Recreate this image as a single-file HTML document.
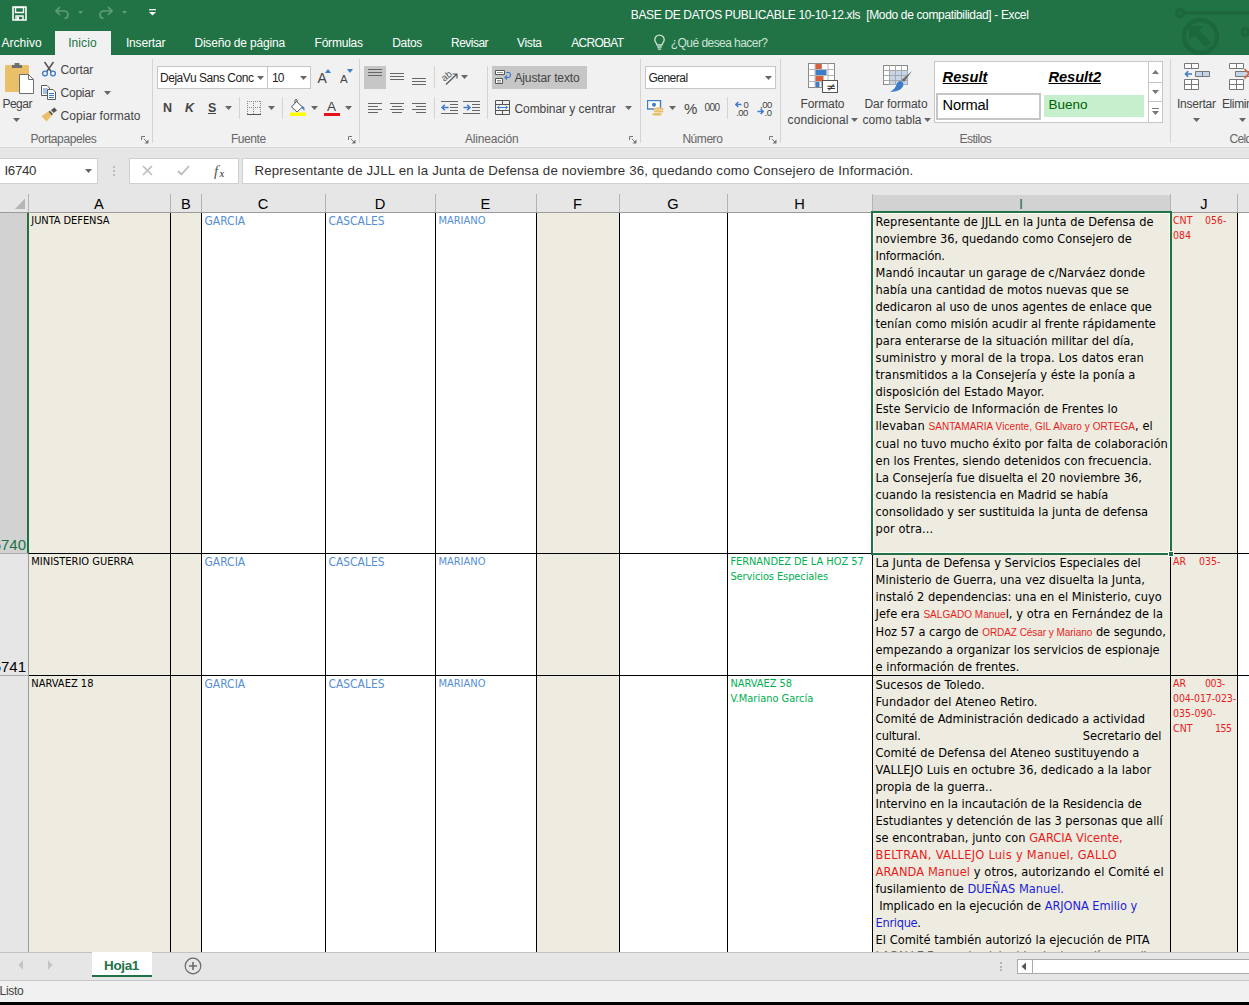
<!DOCTYPE html>
<html lang="es"><head><meta charset="utf-8"><title>BASE DE DATOS PUBLICABLE 10-10-12.xls - Excel</title>
<style>
html,body{margin:0;padding:0}
body{width:1249px;height:1005px;position:relative;overflow:hidden;background:#fff;font-family:"Liberation Sans",sans-serif;font-size:12px;color:#444}
body>div,body>svg,body>span{position:absolute}
.t{white-space:pre;line-height:0;display:block}
.c{white-space:pre;font-family:"DejaVu Sans Condensed","DejaVu Sans",sans-serif;color:#000}
.c div{height:17px;line-height:17px}
.r{color:#e81c1c}.b{color:#1c1cd8}
.a{font-family:"Liberation Sans",sans-serif;color:#e81c1c}
</style></head><body>
<div style="left:0px;top:0px;width:1249px;height:55px;background:#217346;"></div>
<div style="left:0px;top:55px;width:1249px;height:92px;background:#f1f1f1;"></div>
<div style="left:0px;top:147px;width:1249px;height:1px;background:#d6d6d6;"></div>
<div style="left:0px;top:148px;width:1249px;height:65px;background:#e6e6e6;"></div>
<div style="left:55px;top:31px;width:56px;height:24px;background:#f1f1f1;"></div>
<svg style="left:1150px;top:0px" width="99" height="55" viewBox="0 0 99 55"><g fill="none" stroke="#1c673d" stroke-width="3.6"><circle cx="30" cy="13" r="3.4"/><path d="M34.5 13H99"/><circle cx="50.5" cy="36.5" r="16.5" stroke-width="4.4"/><circle cx="95.5" cy="32" r="3.4"/></g><path d="M39 26H53.5L49 30.5L61 42.5L56 47.5L44 35.5L39 40.5Z" fill="#1c673d"/></svg>
<svg style="left:12px;top:6px" width="15" height="15" viewBox="0 0 15 15"><path d="M1 1H14V14H1Z" fill="none" stroke="#fff" stroke-width="1.6"/><path d="M3.5 1.5H11.5V6.5H3.5Z" fill="none" stroke="#fff" stroke-width="1.4"/><path d="M4 14V10H11V14" fill="none" stroke="#fff" stroke-width="1.4"/><rect x="5" y="11" width="2" height="3" fill="#fff"/></svg>
<svg style="left:54px;top:6px" width="16" height="13" viewBox="0 0 16 13"><path d="M6 1L2 5L6 9M2 5H10Q14 5 14 9Q14 12 10.5 12.5" fill="none" stroke="#5f9c7a" stroke-width="1.7"/></svg>
<svg style="left:78.0px;top:10.5px" width="5" height="3" viewBox="0 0 5 3"><path d="M0 0H5L2.5 3Z" fill="#5f9c7a"/></svg>
<svg style="left:98px;top:6px" width="16" height="13" viewBox="0 0 16 13"><path d="M10 1L14 5L10 9M14 5H6Q2 5 2 9Q2 12 5.5 12.5" fill="none" stroke="#5f9c7a" stroke-width="1.7"/></svg>
<svg style="left:122.0px;top:10.5px" width="5" height="3" viewBox="0 0 5 3"><path d="M0 0H5L2.5 3Z" fill="#5f9c7a"/></svg>
<svg style="left:149px;top:9px" width="7" height="7" viewBox="0 0 7 7"><path d="M0 0.7H7" stroke="#fff" stroke-width="1.2"/><path d="M0 3H7L3.5 6.5Z" fill="#fff"/></svg>
<span class="t" style="top:15.25px;font-size:12px;color:#fff;letter-spacing:-0.348px;left:630.8px;">BASE DE DATOS PUBLICABLE 10-10-12.xls  [Modo de compatibilidad] - Excel</span>
<span class="t" style="top:42.75px;font-size:12px;color:#fff;letter-spacing:-0.002px;left:1.6px;">Archivo</span>
<span class="t" style="top:42.75px;font-size:12px;color:#217346;letter-spacing:0.081px;left:68.2px;">Inicio</span>
<span class="t" style="top:42.75px;font-size:12px;color:#fff;letter-spacing:-0.161px;left:125.9px;">Insertar</span>
<span class="t" style="top:42.75px;font-size:12px;color:#fff;letter-spacing:-0.175px;left:194.4px;">Diseño de página</span>
<span class="t" style="top:42.75px;font-size:12px;color:#fff;letter-spacing:-0.202px;left:314.5px;">Fórmulas</span>
<span class="t" style="top:42.75px;font-size:12px;color:#fff;letter-spacing:-0.312px;left:392.2px;">Datos</span>
<span class="t" style="top:42.75px;font-size:12px;color:#fff;letter-spacing:-0.541px;left:451.1px;">Revisar</span>
<span class="t" style="top:42.75px;font-size:12px;color:#fff;letter-spacing:-0.354px;left:517px;">Vista</span>
<span class="t" style="top:42.75px;font-size:12px;color:#fff;letter-spacing:-0.704px;left:571.2px;">ACROBAT</span>
<svg style="left:653px;top:34px" width="13" height="17" viewBox="0 0 13 17"><path d="M6.5 1.2C3.6 1.2 1.8 3.3 1.8 5.7C1.8 8 3.6 8.9 4 11H9C9.4 8.9 11.2 8 11.2 5.7C11.2 3.3 9.4 1.2 6.5 1.2Z" fill="none" stroke="#cfe3d7" stroke-width="1.3"/><path d="M4.3 13H8.7M4.8 15.2H8.2" stroke="#cfe3d7" stroke-width="1.3"/></svg>
<span class="t" style="top:42.75px;font-size:12px;color:#cfe3d7;letter-spacing:-0.552px;left:670.8px;">¿Qué desea hacer?</span>
<div style="left:0px;top:213px;width:28px;height:739px;background:#e6e6e6;"></div>
<div style="left:0px;top:213px;width:27px;height:340px;background:#d2d2d2;"></div>
<div style="left:27px;top:213px;width:2px;height:341px;background:#217346;"></div>
<div style="left:28px;top:554px;width:1px;height:398px;background:#9b9b9b;"></div>
<div style="left:0px;top:553px;width:28px;height:1px;background:#ababab;"></div>
<div style="left:0px;top:675px;width:28px;height:1px;background:#ababab;"></div>
<div style="left:873px;top:195px;width:297px;height:17px;background:#d2d2d2;"></div>
<div style="left:29px;top:213px;width:141px;height:739px;background:#eeece1;"></div>
<div style="left:171px;top:213px;width:30px;height:739px;background:#eeece1;"></div>
<div style="left:537px;top:213px;width:82px;height:739px;background:#eeece1;"></div>
<div style="left:873px;top:213px;width:297px;height:739px;background:#eeece1;"></div>
<div style="left:1171px;top:213px;width:66px;height:739px;background:#eeece1;"></div>
<div style="left:0px;top:212px;width:1249px;height:1px;background:#9b9b9b;"></div>
<div style="left:28px;top:194px;width:1px;height:18px;background:#b4b4b4;"></div>
<div style="left:170px;top:194px;width:1px;height:18px;background:#b4b4b4;"></div>
<div style="left:201px;top:194px;width:1px;height:18px;background:#b4b4b4;"></div>
<div style="left:325px;top:194px;width:1px;height:18px;background:#b4b4b4;"></div>
<div style="left:435px;top:194px;width:1px;height:18px;background:#b4b4b4;"></div>
<div style="left:536px;top:194px;width:1px;height:18px;background:#b4b4b4;"></div>
<div style="left:619px;top:194px;width:1px;height:18px;background:#b4b4b4;"></div>
<div style="left:727px;top:194px;width:1px;height:18px;background:#b4b4b4;"></div>
<div style="left:872px;top:194px;width:1px;height:18px;background:#b4b4b4;"></div>
<div style="left:1170px;top:194px;width:1px;height:18px;background:#b4b4b4;"></div>
<div style="left:1237px;top:194px;width:1px;height:18px;background:#b4b4b4;"></div>
<div style="left:170px;top:213px;width:1px;height:739px;background:#000;"></div>
<div style="left:201px;top:213px;width:1px;height:739px;background:#000;"></div>
<div style="left:325px;top:213px;width:1px;height:739px;background:#000;"></div>
<div style="left:435px;top:213px;width:1px;height:739px;background:#000;"></div>
<div style="left:536px;top:213px;width:1px;height:739px;background:#000;"></div>
<div style="left:619px;top:213px;width:1px;height:739px;background:#000;"></div>
<div style="left:727px;top:213px;width:1px;height:739px;background:#000;"></div>
<div style="left:872px;top:213px;width:1px;height:739px;background:#000;"></div>
<div style="left:1170px;top:213px;width:1px;height:739px;background:#000;"></div>
<div style="left:1237px;top:213px;width:1px;height:739px;background:#000;"></div>
<div style="left:29px;top:553px;width:1220px;height:1px;background:#000;"></div>
<div style="left:29px;top:675px;width:1220px;height:1px;background:#000;"></div>
<div style="left:873px;top:213px;width:297px;height:340px;border:1px solid rgba(255,255,255,.75);box-sizing:border-box;"></div>
<div style="left:871px;top:211px;width:301px;height:344px;border:2px solid #217346;box-sizing:border-box;"></div>
<div style="left:1168px;top:551px;width:6px;height:6px;background:#217346;border:1px solid #fff;box-sizing:border-box;"></div>
<svg style="left:14.5px;top:198px" width="10.5" height="11" viewBox="0 0 10.5 11"><path d="M10.5 0V11H0Z" fill="#b5b5b5"/></svg>
<span class="t" style="top:203.52px;font-size:14.67px;color:#000;left:94.11px;">A</span>
<span class="t" style="top:203.52px;font-size:14.67px;color:#000;left:181.11px;">B</span>
<span class="t" style="top:203.52px;font-size:14.67px;color:#000;left:257.7px;">C</span>
<span class="t" style="top:203.52px;font-size:14.67px;color:#000;left:374.7px;">D</span>
<span class="t" style="top:203.52px;font-size:14.67px;color:#000;left:480.61px;">E</span>
<span class="t" style="top:203.52px;font-size:14.67px;color:#000;left:573.02px;">F</span>
<span class="t" style="top:203.52px;font-size:14.67px;color:#000;left:667.3px;">G</span>
<span class="t" style="top:203.52px;font-size:14.67px;color:#000;left:794.2px;">H</span>
<span class="t" style="top:203.52px;font-size:14.67px;color:#000;left:1200.34px;">J</span>
<span class="t" style="top:203.52px;font-size:14.67px;color:#217346;left:1018.96px;">I</span>
<span class="t" style="top:544.61px;font-size:15px;color:#217346;left:-7.38px;">6740</span>
<span class="t" style="top:666.61px;font-size:15px;color:#000;left:-7.38px;">6741</span>
<div style="left:152px;top:59px;width:1px;height:84px;background:#d4d4d4;"></div>
<div style="left:359px;top:59px;width:1px;height:84px;background:#d4d4d4;"></div>
<div style="left:640px;top:59px;width:1px;height:84px;background:#d4d4d4;"></div>
<div style="left:780px;top:59px;width:1px;height:84px;background:#d4d4d4;"></div>
<div style="left:1170px;top:59px;width:1px;height:84px;background:#d4d4d4;"></div>
<div style="left:239px;top:97px;width:1px;height:22px;background:#d4d4d4;"></div>
<div style="left:282px;top:97px;width:1px;height:22px;background:#d4d4d4;"></div>
<div style="left:434px;top:66px;width:1px;height:22px;background:#d4d4d4;"></div>
<div style="left:434px;top:97px;width:1px;height:22px;background:#d4d4d4;"></div>
<div style="left:487px;top:66px;width:1px;height:53px;background:#d4d4d4;"></div>
<div style="left:727px;top:97px;width:1px;height:22px;background:#d4d4d4;"></div>
<span class="t" style="top:139.35px;font-size:12px;color:#666;letter-spacing:-0.393px;left:30.4px;">Portapapeles</span>
<span class="t" style="top:139.35px;font-size:12px;color:#666;letter-spacing:-0.460px;left:231px;">Fuente</span>
<span class="t" style="top:139.35px;font-size:12px;color:#666;letter-spacing:-0.198px;left:465px;">Alineación</span>
<span class="t" style="top:139.35px;font-size:12px;color:#666;letter-spacing:-0.448px;left:682.4px;">Número</span>
<span class="t" style="top:139.35px;font-size:12px;color:#666;letter-spacing:-0.478px;left:959.4px;">Estilos</span>
<span class="t" style="top:139.35px;font-size:12px;color:#666;letter-spacing:-0.727px;left:1229.6px;">Celdas</span>
<svg style="left:141px;top:135.5px" width="8" height="8" viewBox="0 0 8 8"><path d="M0.5 4V0.5H4" fill="none" stroke="#777" stroke-width="1"/><path d="M2.8 2.8L6 6" stroke="#777" stroke-width="1"/><path d="M7.5 3.5V7.5H3.5Z" fill="#777"/></svg>
<svg style="left:348px;top:135.5px" width="8" height="8" viewBox="0 0 8 8"><path d="M0.5 4V0.5H4" fill="none" stroke="#777" stroke-width="1"/><path d="M2.8 2.8L6 6" stroke="#777" stroke-width="1"/><path d="M7.5 3.5V7.5H3.5Z" fill="#777"/></svg>
<svg style="left:628.5px;top:135.5px" width="8" height="8" viewBox="0 0 8 8"><path d="M0.5 4V0.5H4" fill="none" stroke="#777" stroke-width="1"/><path d="M2.8 2.8L6 6" stroke="#777" stroke-width="1"/><path d="M7.5 3.5V7.5H3.5Z" fill="#777"/></svg>
<svg style="left:769px;top:135.5px" width="8" height="8" viewBox="0 0 8 8"><path d="M0.5 4V0.5H4" fill="none" stroke="#777" stroke-width="1"/><path d="M2.8 2.8L6 6" stroke="#777" stroke-width="1"/><path d="M7.5 3.5V7.5H3.5Z" fill="#777"/></svg>
<svg style="left:4px;top:62px" width="30" height="32" viewBox="0 0 30 32"><rect x="1" y="3" width="24" height="27" rx="1.5" fill="#e9bf69"/><path d="M8 5V3H10.5V1H15.5V3H18V6H8Z" fill="#6e6e6e"/><path d="M15.5 12.5H24.5L29.5 17.5V31.5H15.5Z" fill="#fff" stroke="#6e6e6e" stroke-width="1"/><path d="M24.5 12.5V17.5H29.5" fill="none" stroke="#6e6e6e" stroke-width="1"/></svg>
<span class="t" style="top:103.85px;font-size:12px;color:#444;letter-spacing:-0.486px;left:2.4px;">Pegar</span>
<svg style="left:13.100000000000001px;top:117.5px" width="7" height="4" viewBox="0 0 7 4"><path d="M0 0H7L3.5 4Z" fill="#666"/></svg>
<svg style="left:41px;top:61px" width="16" height="16" viewBox="0 0 16 16"><path d="M3.5 1L10.5 11M12.5 1L5.5 11" stroke="#555" stroke-width="1.5" fill="none"/><circle cx="4" cy="12.5" r="2.4" fill="none" stroke="#3d7cc9" stroke-width="1.3"/><circle cx="12" cy="12.5" r="2.4" fill="none" stroke="#3d7cc9" stroke-width="1.3"/></svg>
<span class="t" style="top:69.85px;font-size:12px;color:#444;letter-spacing:-0.157px;left:60.6px;">Cortar</span>
<svg style="left:41px;top:85px" width="16" height="15" viewBox="0 0 16 15"><path d="M0.5 0.5H6L8.5 3V10.5H0.5Z" fill="#fff" stroke="#5a5a5a"/><path d="M2 4H6.5M2 6H6.5M2 8H6.5" stroke="#3d7cc9" stroke-width="1"/><path d="M6.5 4.5H12L14.5 7V14.5H6.5Z" fill="#fff" stroke="#5a5a5a"/><path d="M8 8.5H13M8 10.5H13M8 12.5H13" stroke="#3d7cc9" stroke-width="1"/></svg>
<span class="t" style="top:92.85px;font-size:12px;color:#444;letter-spacing:-0.260px;left:60.6px;">Copiar</span>
<svg style="left:103.9px;top:90.5px" width="7" height="4" viewBox="0 0 7 4"><path d="M0 0H7L3.5 4Z" fill="#666"/></svg>
<svg style="left:41px;top:107px" width="17" height="15" viewBox="0 0 17 15"><path d="M10 3L13.5 0.5L16 3.5L12.5 6Z" fill="#555"/><path d="M9 3.5L12 7L5.5 14.5L0.5 9Z" fill="#e9bf69"/><path d="M8.2 4.2L11.3 7.8" stroke="#555" stroke-width="1.6"/></svg>
<span class="t" style="top:115.85px;font-size:12px;color:#444;letter-spacing:0.045px;left:60.6px;">Copiar formato</span>
<div style="left:157px;top:66px;width:111px;height:23px;background:#fff;border:1px solid #c6c6c6;box-sizing:border-box;"></div>
<div style="left:268px;top:66px;width:43px;height:23px;background:#fff;border:1px solid #c6c6c6;box-sizing:border-box;border-left:none;"></div>
<span class="t" style="top:77.85px;font-size:12px;color:#222;letter-spacing:-0.466px;left:160px;width:94px;overflow:hidden;height:20px;margin-top:-10px;line-height:20px;">DejaVu Sans Conc</span>
<svg style="left:256.9px;top:75.6px" width="7" height="4" viewBox="0 0 7 4"><path d="M0 0H7L3.5 4Z" fill="#666"/></svg>
<span class="t" style="top:77.85px;font-size:12px;color:#222;letter-spacing:-0.930px;left:272px;">10</span>
<svg style="left:299.9px;top:75.6px" width="7" height="4" viewBox="0 0 7 4"><path d="M0 0H7L3.5 4Z" fill="#666"/></svg>
<span class="t" style="top:77.76px;font-size:14px;color:#444;left:317.6px;">A</span>
<svg style="left:325px;top:69px" width="6" height="4" viewBox="0 0 6 4"><path d="M0 4H6L3 0Z" fill="#3d7cc9"/></svg>
<span class="t" style="top:78.62px;font-size:11.5px;color:#444;left:340px;">A</span>
<svg style="left:346.5px;top:69px" width="6" height="4" viewBox="0 0 6 4"><path d="M0 0H6L3 4Z" fill="#3d7cc9"/></svg>
<span class="t" style="top:107.88px;font-size:12.5px;color:#444;left:163px;font-weight:bold;">N</span>
<span class="t" style="top:107.88px;font-size:12.5px;color:#444;left:185px;font-weight:bold;font-style:italic;">K</span>
<span class="t" style="top:107.88px;font-size:12.5px;color:#444;left:208px;font-weight:bold;">S</span>
<div style="left:207.5px;top:113px;width:8.5px;height:1px;background:#444;"></div>
<svg style="left:224.5px;top:106.2px" width="7" height="4" viewBox="0 0 7 4"><path d="M0 0H7L3.5 4Z" fill="#666"/></svg>
<svg style="left:247px;top:101px" width="14" height="14" viewBox="0 0 14 14"><g shape-rendering="crispEdges" fill="none" stroke="#8a8a8a" stroke-width="1" stroke-dasharray="1 1"><path d="M0 0.5H14M0 6.5H14M0.5 0V13M6.5 0V13M13.5 0V13"/></g><path d="M0 13.5H14" stroke="#555" stroke-width="1" shape-rendering="crispEdges"/></svg>
<svg style="left:267.9px;top:106.2px" width="7" height="4" viewBox="0 0 7 4"><path d="M0 0H7L3.5 4Z" fill="#666"/></svg>
<svg style="left:290px;top:99px" width="17" height="18" viewBox="0 0 17 18"><path d="M6.5 2.5L12.5 8L7 13L1.5 8Z" fill="#fff" stroke="#555" stroke-width="1"/><path d="M5 4V1.5Q5 0.5 6 0.5T7 1.5V3" fill="none" stroke="#555" stroke-width="1"/><path d="M12.5 7Q15.5 8.5 14.2 12Q13 9.5 11.5 9Z" fill="#3d7cc9"/><rect x="0" y="13.5" width="16" height="3.5" fill="#ffff00"/></svg>
<svg style="left:310.7px;top:106.2px" width="7" height="4" viewBox="0 0 7 4"><path d="M0 0H7L3.5 4Z" fill="#666"/></svg>
<span class="t" style="top:106.73px;font-size:13.5px;color:#444;left:327px;">A</span>
<div style="left:324px;top:112.5px;width:16px;height:3.5px;background:#e8101a;"></div>
<svg style="left:344.9px;top:106.2px" width="7" height="4" viewBox="0 0 7 4"><path d="M0 0H7L3.5 4Z" fill="#666"/></svg>
<div style="left:364px;top:66px;width:22px;height:23px;background:#c6c6c6;"></div>
<div style="left:367.5px;top:69px;width:14.5px;height:1px;background:#666;"></div>
<div style="left:367.5px;top:72px;width:14.5px;height:1px;background:#666;"></div>
<div style="left:367.5px;top:75px;width:14.5px;height:1px;background:#666;"></div>
<div style="left:390px;top:73px;width:14px;height:1px;background:#666;"></div>
<div style="left:390px;top:76px;width:14px;height:1px;background:#666;"></div>
<div style="left:390px;top:79px;width:14px;height:1px;background:#666;"></div>
<div style="left:411.5px;top:78px;width:14px;height:1px;background:#666;"></div>
<div style="left:411.5px;top:81px;width:14px;height:1px;background:#666;"></div>
<div style="left:411.5px;top:84px;width:14px;height:1px;background:#666;"></div>
<div style="left:367.5px;top:103px;width:14px;height:1px;background:#666;"></div>
<div style="left:390.0px;top:103px;width:14px;height:1px;background:#666;"></div>
<div style="left:411.5px;top:103px;width:14px;height:1px;background:#666;"></div>
<div style="left:367.5px;top:106px;width:10px;height:1px;background:#666;"></div>
<div style="left:392.0px;top:106px;width:10px;height:1px;background:#666;"></div>
<div style="left:415.5px;top:106px;width:10px;height:1px;background:#666;"></div>
<div style="left:367.5px;top:109px;width:14px;height:1px;background:#666;"></div>
<div style="left:390.0px;top:109px;width:14px;height:1px;background:#666;"></div>
<div style="left:411.5px;top:109px;width:14px;height:1px;background:#666;"></div>
<div style="left:367.5px;top:112px;width:10px;height:1px;background:#666;"></div>
<div style="left:392.0px;top:112px;width:10px;height:1px;background:#666;"></div>
<div style="left:415.5px;top:112px;width:10px;height:1px;background:#666;"></div>
<svg style="left:441px;top:68px" width="18" height="18" viewBox="0 0 18 18"><text x="1" y="11" font-size="9.5" fill="#555" font-family="Liberation Sans,sans-serif" transform="rotate(-38 6 9)">ab</text><path d="M5 16.5L15.5 6.5M11.5 6H16V10.5" fill="none" stroke="#555" stroke-width="1.2"/></svg>
<svg style="left:460.9px;top:75.2px" width="7" height="4" viewBox="0 0 7 4"><path d="M0 0H7L3.5 4Z" fill="#666"/></svg>
<svg style="left:441px;top:101px" width="18" height="14" viewBox="0 0 18 14"><path d="M0 0.5H17M9 3.5H17M9 6.5H17M9 9.5H17M0 12.5H17" stroke="#666" stroke-width="1"/><path d="M1 6.5H7.5M3.8 3.8L1 6.5L3.8 9.2" fill="none" stroke="#3d7cc9" stroke-width="1.5"/></svg>
<svg style="left:463px;top:101px" width="18" height="14" viewBox="0 0 18 14"><path d="M0 0.5H17M9 3.5H17M9 6.5H17M9 9.5H17M0 12.5H17" stroke="#666" stroke-width="1"/><path d="M0.5 6.5H7M4.2 3.8L7 6.5L4.2 9.2" fill="none" stroke="#3d7cc9" stroke-width="1.5"/></svg>
<div style="left:492px;top:66px;width:95px;height:23px;background:#c6c6c6;"></div>
<svg style="left:495px;top:69px" width="16" height="16" viewBox="0 0 16 16"><path d="M0.5 1.5H9.5V5.5H0.5ZM0.5 9.5H7.5V14.5H0.5Z" fill="#fff" stroke="#555"/><path d="M2 3.5H8M2 11.5H6M2 13H6" stroke="#777" stroke-width="0.8"/><path d="M11 3.5H13.5Q15.5 3.5 15.5 6T13.5 8.5H10M12 6.5L10 8.5L12 10.5" fill="none" stroke="#3d7cc9" stroke-width="1.2"/></svg>
<span class="t" style="top:77.85px;font-size:12px;color:#444;letter-spacing:-0.116px;left:514.4px;">Ajustar texto</span>
<svg style="left:495px;top:100px" width="16" height="16" viewBox="0 0 16 16"><path d="M0.5 0.5H14.5V14.5H0.5ZM0.5 4.5H14.5M0.5 10.5H14.5M7.5 0.5V4.5M7.5 10.5V14.5" fill="none" stroke="#555" stroke-width="1"/><path d="M2.5 7.5H12.5M4.5 5.8L2.5 7.5L4.5 9.2M10.5 5.8L12.5 7.5L10.5 9.2" fill="none" stroke="#3d7cc9" stroke-width="1"/></svg>
<span class="t" style="top:108.85px;font-size:12px;color:#444;letter-spacing:-0.047px;left:514.4px;">Combinar y centrar</span>
<svg style="left:624.9px;top:106.2px" width="7" height="4" viewBox="0 0 7 4"><path d="M0 0H7L3.5 4Z" fill="#666"/></svg>
<div style="left:645px;top:66px;width:131px;height:23px;background:#fff;border:1px solid #c6c6c6;box-sizing:border-box;"></div>
<span class="t" style="top:77.85px;font-size:12px;color:#222;letter-spacing:-0.500px;left:648.4px;">General</span>
<svg style="left:764.9px;top:75.6px" width="7" height="4" viewBox="0 0 7 4"><path d="M0 0H7L3.5 4Z" fill="#666"/></svg>
<svg style="left:647px;top:100px" width="18" height="17" viewBox="0 0 18 17"><rect x="0.5" y="0.5" width="13" height="8.5" fill="#fff" stroke="#3d7cc9" stroke-width="1.4"/><circle cx="7" cy="4.8" r="2" fill="#3d7cc9"/><ellipse cx="11.5" cy="9" rx="5" ry="1.8" fill="#e9bf69"/><ellipse cx="11.5" cy="11.5" rx="5" ry="1.8" fill="#e9bf69" stroke="#f1f1f1" stroke-width="0.6"/><ellipse cx="10" cy="14.2" rx="5" ry="1.8" fill="#e9bf69" stroke="#f1f1f1" stroke-width="0.6"/></svg>
<svg style="left:668.5px;top:106.2px" width="7" height="4" viewBox="0 0 7 4"><path d="M0 0H7L3.5 4Z" fill="#666"/></svg>
<span class="t" style="top:108.81px;font-size:15px;color:#444;left:684px;">%</span>
<span class="t" style="top:107.54px;font-size:10px;color:#444;letter-spacing:-0.562px;left:704.4px;">000</span>
<svg style="left:735px;top:100px" width="16" height="16" viewBox="0 0 16 16"><path d="M0.8 4.5H6.5M3.3 2L0.8 4.5L3.3 7" fill="none" stroke="#3d7cc9" stroke-width="1.4"/><text x="8.5" y="8" font-size="9.5" fill="#444" font-family="Liberation Sans,sans-serif">0</text><text x="1" y="15.5" font-size="9.5" fill="#444" letter-spacing="-0.4" font-family="Liberation Sans,sans-serif">,00</text></svg>
<svg style="left:757px;top:100px" width="16" height="16" viewBox="0 0 16 16"><text x="3" y="8" font-size="9.5" fill="#444" letter-spacing="-0.4" font-family="Liberation Sans,sans-serif">,00</text><path d="M0.5 11.5H6.2M3.7 9L6.2 11.5L3.7 14" fill="none" stroke="#3d7cc9" stroke-width="1.4"/><text x="7.5" y="15.5" font-size="9.5" fill="#444" letter-spacing="-0.4" font-family="Liberation Sans,sans-serif">,0</text></svg>
<svg style="left:808px;top:63px" width="31" height="30" viewBox="0 0 31 30"><rect x="0.5" y="0.5" width="26" height="24" fill="#fff" stroke="#8a8a8a"/><path d="M0.5 6.5H26.5M0.5 12.5H26.5M0.5 18.5H26.5M7 0.5V24.5M13.5 0.5V24.5M20 0.5V24.5" stroke="#b5b5b5" stroke-width="1" fill="none"/><rect x="7.5" y="1" width="6" height="5" fill="#d6603b"/><rect x="7.5" y="7" width="11" height="5" fill="#3d7cc9"/><rect x="7.5" y="13" width="8" height="5" fill="#d6603b"/><rect x="7.5" y="19" width="4" height="5" fill="#3d7cc9"/><rect x="14.5" y="17.5" width="15" height="12" fill="#fff" stroke="#555"/><text x="18" y="28" font-size="12" fill="#333" font-family="DejaVu Sans,sans-serif">≠</text></svg>
<span class="t" style="top:103.85px;font-size:12px;color:#444;letter-spacing:-0.127px;left:800.6px;">Formato</span>
<span class="t" style="top:119.85px;font-size:12px;color:#444;letter-spacing:0.087px;left:787.6px;">condicional</span>
<svg style="left:850.9px;top:117.5px" width="7" height="4" viewBox="0 0 7 4"><path d="M0 0H7L3.5 4Z" fill="#666"/></svg>
<svg style="left:883px;top:65px" width="30" height="28" viewBox="0 0 30 28"><rect x="0.5" y="0.5" width="24" height="19" fill="#fff" stroke="#8a8a8a"/><rect x="6.5" y="5.5" width="18" height="14" fill="#c5d5ea"/><path d="M0.5 5.5H24.5M0.5 10.5H24.5M0.5 15.5H24.5M6.5 0.5V19.5M12.5 0.5V19.5M18.5 0.5V19.5" stroke="#a8a8a8" stroke-width="1" fill="none"/><path d="M29 6L21 17L18.5 15Z" fill="#6b6b6b"/><path d="M17.5 16Q21.5 17 20 21.5Q17 26.5 7 27Q12.5 23.5 13.5 19.5Q14.5 16 17.5 16Z" fill="#3d7cc9"/></svg>
<span class="t" style="top:103.85px;font-size:12px;color:#444;letter-spacing:-0.014px;left:864.4px;">Dar formato</span>
<span class="t" style="top:119.85px;font-size:12px;color:#444;letter-spacing:0.050px;left:862.4px;">como tabla</span>
<svg style="left:923.9px;top:117.5px" width="7" height="4" viewBox="0 0 7 4"><path d="M0 0H7L3.5 4Z" fill="#666"/></svg>
<div style="left:934px;top:61px;width:215px;height:62px;background:#fff;border:1px solid #c6c6c6;box-sizing:border-box;"></div>
<div style="left:1148px;top:61px;width:15px;height:22px;background:#fff;border:1px solid #c6c6c6;box-sizing:border-box;"></div>
<div style="left:1148px;top:82px;width:15px;height:20px;background:#fff;border:1px solid #c6c6c6;box-sizing:border-box;"></div>
<div style="left:1148px;top:101px;width:15px;height:22px;background:#fff;border:1px solid #c6c6c6;box-sizing:border-box;"></div>
<svg style="left:1152px;top:70px" width="7" height="4" viewBox="0 0 7 4"><path d="M0 4H7L3.5 0Z" fill="#777"/></svg>
<svg style="left:1152.0px;top:90.0px" width="7" height="4" viewBox="0 0 7 4"><path d="M0 0H7L3.5 4Z" fill="#777"/></svg>
<svg style="left:1152px;top:108px" width="7" height="8" viewBox="0 0 7 8"><path d="M0 0.5H7" stroke="#777"/><path d="M0 3H7L3.5 7Z" fill="#777"/></svg>
<span class="t" style="top:76.92px;font-size:14.67px;color:#000;letter-spacing:0.001px;left:942.6px;font-weight:bold;font-style:italic;text-decoration:underline;">Result</span>
<span class="t" style="top:76.92px;font-size:14.67px;color:#000;letter-spacing:-0.050px;left:1048.4px;font-weight:bold;font-style:italic;text-decoration:underline;">Result2</span>
<div style="left:935.5px;top:92.5px;width:105px;height:27px;background:#fff;border:2px solid #c6c6c6;box-sizing:border-box;"></div>
<span class="t" style="top:105.12px;font-size:14.67px;color:#000;letter-spacing:-0.206px;left:942.6px;">Normal</span>
<div style="left:1044px;top:95px;width:100px;height:21.5px;background:#c6efce;"></div>
<span class="t" style="top:104.93px;font-size:13.5px;color:#006100;letter-spacing:-0.009px;left:1048.4px;">Bueno</span>
<svg style="left:1184px;top:63px" width="27" height="28" viewBox="0 0 27 28"><path d="M0.5 0.5H14.5V5.5H0.5ZM7.5 0.5V5.5" fill="#fff" stroke="#777"/><path d="M11.5 8.5H25.5V13.5H11.5Z" fill="#c5d5ea" stroke="#777"/><path d="M18.5 8.5V13.5" stroke="#777"/><path d="M1.5 11H8M4.2 8.2L1.5 11L4.2 13.8" fill="none" stroke="#3d7cc9" stroke-width="1.6"/><path d="M0.5 16.5H14.5V26.5H0.5ZM7.5 16.5V26.5M0.5 21.5H14.5" fill="#fff" stroke="#777"/></svg>
<span class="t" style="top:103.85px;font-size:12px;color:#444;letter-spacing:-0.248px;left:1177px;">Insertar</span>
<svg style="left:1192.9px;top:117.5px" width="7" height="4" viewBox="0 0 7 4"><path d="M0 0H7L3.5 4Z" fill="#666"/></svg>
<svg style="left:1229px;top:63px" width="20" height="28" viewBox="0 0 20 28"><path d="M0.5 0.5H14.5V5.5H0.5ZM7.5 0.5V5.5" fill="#fff" stroke="#777"/><path d="M6.5 8.5H20.5V13.5H6.5Z" fill="#c5d5ea" stroke="#777"/><path d="M15.5 6L20 10.5L15.5 15.5" fill="none" stroke="#d6603b" stroke-width="1.6"/><path d="M0.5 16.5H14.5V26.5H0.5ZM7.5 16.5V26.5M0.5 21.5H14.5" fill="#fff" stroke="#777"/></svg>
<span class="t" style="top:103.85px;font-size:12px;color:#444;letter-spacing:-0.355px;left:1221.9px;">Eliminar</span>
<svg style="left:1238.9px;top:117.5px" width="7" height="4" viewBox="0 0 7 4"><path d="M0 0H7L3.5 4Z" fill="#666"/></svg>
<div style="left:-1px;top:158px;width:99px;height:26px;background:#fff;border:1px solid #d0d0d0;box-sizing:border-box;"></div>
<span class="t" style="top:171.2px;font-size:13.3px;color:#333;letter-spacing:-0.356px;left:4.5px;">I6740</span>
<svg style="left:84.8px;top:168.8px" width="7" height="4" viewBox="0 0 7 4"><path d="M0 0H7L3.5 4Z" fill="#666"/></svg>
<div style="left:113px;top:165.5px;width:2px;height:2px;background:#bdbdbd;"></div>
<div style="left:113px;top:169.5px;width:2px;height:2px;background:#bdbdbd;"></div>
<div style="left:113px;top:173.5px;width:2px;height:2px;background:#bdbdbd;"></div>
<div style="left:129px;top:158px;width:110px;height:26px;background:#fff;border:1px solid #d0d0d0;box-sizing:border-box;"></div>
<svg style="left:142px;top:165px" width="11" height="11" viewBox="0 0 11 11"><path d="M1 1L10 10M10 1L1 10" stroke="#bcbcbc" stroke-width="1.6"/></svg>
<svg style="left:177px;top:165px" width="13" height="11" viewBox="0 0 13 11"><path d="M1 6L4.5 9.5L12 1" fill="none" stroke="#bcbcbc" stroke-width="1.8"/></svg>
<span class="t" style="top:170.81px;font-size:15px;color:#555;left:214px;font-family:'Liberation Serif',serif;font-style:italic;">f</span>
<span class="t" style="top:174.21px;font-size:9.5px;color:#555;left:219.5px;font-family:'Liberation Serif',serif;font-weight:bold;font-style:italic;">x</span>
<div style="left:242px;top:158px;width:1010px;height:26px;background:#fff;border:1px solid #d0d0d0;box-sizing:border-box;"></div>
<span class="t" style="top:171.4px;font-size:13.3px;color:#333;letter-spacing:0.162px;left:254.4px;">Representante de JJLL en la Junta de Defensa de noviembre 36, quedando como Consejero de Información.</span>
<span class="t" style="top:220.99px;font-size:11px;color:#000;letter-spacing:-0.072px;left:31.3px;font-family:'DejaVu Sans Condensed','DejaVu Sans',sans-serif;">JUNTA DEFENSA</span>
<span class="t" style="top:220.88px;font-size:11.9px;color:#558ed5;letter-spacing:0.052px;left:204.5px;font-family:'DejaVu Sans Condensed','DejaVu Sans',sans-serif;">GARCIA</span>
<span class="t" style="top:220.88px;font-size:11.9px;color:#558ed5;letter-spacing:0.014px;left:328.5px;font-family:'DejaVu Sans Condensed','DejaVu Sans',sans-serif;">CASCALES</span>
<span class="t" style="top:220.99px;font-size:11px;color:#558ed5;letter-spacing:-0.023px;left:438.5px;font-family:'DejaVu Sans Condensed','DejaVu Sans',sans-serif;">MARIANO</span>
<span class="t" style="top:561.99px;font-size:11px;color:#000;letter-spacing:-0.008px;left:31.3px;font-family:'DejaVu Sans Condensed','DejaVu Sans',sans-serif;">MINISTERIO GUERRA</span>
<span class="t" style="top:561.88px;font-size:11.9px;color:#558ed5;letter-spacing:0.052px;left:204.5px;font-family:'DejaVu Sans Condensed','DejaVu Sans',sans-serif;">GARCIA</span>
<span class="t" style="top:561.88px;font-size:11.9px;color:#558ed5;letter-spacing:0.014px;left:328.5px;font-family:'DejaVu Sans Condensed','DejaVu Sans',sans-serif;">CASCALES</span>
<span class="t" style="top:561.99px;font-size:11px;color:#558ed5;letter-spacing:-0.023px;left:438.5px;font-family:'DejaVu Sans Condensed','DejaVu Sans',sans-serif;">MARIANO</span>
<span class="t" style="top:683.99px;font-size:11px;color:#000;letter-spacing:0.015px;left:31.3px;font-family:'DejaVu Sans Condensed','DejaVu Sans',sans-serif;">NARVAEZ 18</span>
<span class="t" style="top:683.88px;font-size:11.9px;color:#558ed5;letter-spacing:0.052px;left:204.5px;font-family:'DejaVu Sans Condensed','DejaVu Sans',sans-serif;">GARCIA</span>
<span class="t" style="top:683.88px;font-size:11.9px;color:#558ed5;letter-spacing:0.014px;left:328.5px;font-family:'DejaVu Sans Condensed','DejaVu Sans',sans-serif;">CASCALES</span>
<span class="t" style="top:683.99px;font-size:11px;color:#558ed5;letter-spacing:-0.023px;left:438.5px;font-family:'DejaVu Sans Condensed','DejaVu Sans',sans-serif;">MARIANO</span>
<span class="t" style="top:561.91px;font-size:10.95px;color:#00b050;letter-spacing:-0.025px;left:730.4px;font-family:'DejaVu Sans Condensed','DejaVu Sans',sans-serif;">FERNANDEZ DE LA HOZ 57</span>
<span class="t" style="top:576.71px;font-size:10.95px;color:#00b050;letter-spacing:-0.073px;left:730.4px;font-family:'DejaVu Sans Condensed','DejaVu Sans',sans-serif;">Servicios Especiales</span>
<span class="t" style="top:683.91px;font-size:10.95px;color:#00b050;left:730.4px;font-family:'DejaVu Sans Condensed','DejaVu Sans',sans-serif;">NARVAEZ 58</span>
<span class="t" style="top:698.71px;font-size:10.95px;color:#00b050;left:730.4px;font-family:'DejaVu Sans Condensed','DejaVu Sans',sans-serif;">V.Mariano García</span>
<span class="t" style="top:220.17px;font-size:10.5px;color:#e81c1c;left:1173px;font-family:'DejaVu Sans Condensed','DejaVu Sans',sans-serif;">CNT</span>
<span class="t" style="top:220.17px;font-size:10.5px;color:#e81c1c;left:1205px;font-family:'DejaVu Sans Condensed','DejaVu Sans',sans-serif;">056-</span>
<span class="t" style="top:235.17px;font-size:10.5px;color:#e81c1c;left:1173px;font-family:'DejaVu Sans Condensed','DejaVu Sans',sans-serif;">084</span>
<span class="t" style="top:561.17px;font-size:10.5px;color:#e81c1c;left:1173px;font-family:'DejaVu Sans Condensed','DejaVu Sans',sans-serif;">AR</span>
<span class="t" style="top:561.17px;font-size:10.5px;color:#e81c1c;left:1199px;font-family:'DejaVu Sans Condensed','DejaVu Sans',sans-serif;">035-</span>
<span class="t" style="top:683.17px;font-size:10.5px;color:#e81c1c;left:1173px;font-family:'DejaVu Sans Condensed','DejaVu Sans',sans-serif;">AR</span>
<span class="t" style="top:683.17px;font-size:10.5px;color:#e81c1c;letter-spacing:-0.484px;left:1205.1px;font-family:'DejaVu Sans Condensed','DejaVu Sans',sans-serif;">003-</span>
<span class="t" style="top:698.17px;font-size:10.5px;color:#e81c1c;letter-spacing:-0.109px;left:1173px;font-family:'DejaVu Sans Condensed','DejaVu Sans',sans-serif;">004-017-023-</span>
<span class="t" style="top:713.17px;font-size:10.5px;color:#e81c1c;letter-spacing:0.016px;left:1173px;font-family:'DejaVu Sans Condensed','DejaVu Sans',sans-serif;">035-090-</span>
<span class="t" style="top:728.17px;font-size:10.5px;color:#e81c1c;letter-spacing:0.054px;left:1173px;font-family:'DejaVu Sans Condensed','DejaVu Sans',sans-serif;">CNT</span>
<span class="t" style="top:728.17px;font-size:10.5px;color:#e81c1c;letter-spacing:-0.477px;left:1215px;font-family:'DejaVu Sans Condensed','DejaVu Sans',sans-serif;">155</span>
<span class="t" style="top:221.61px;font-size:12.7px;color:#000;letter-spacing:0.055px;left:875.6px;font-family:'DejaVu Sans Condensed','DejaVu Sans',sans-serif;">Representante de JJLL en la Junta de Defensa de</span>
<span class="t" style="top:238.61px;font-size:12.7px;color:#000;letter-spacing:-0.019px;left:875.6px;font-family:'DejaVu Sans Condensed','DejaVu Sans',sans-serif;">noviembre 36, quedando como Consejero de</span>
<span class="t" style="top:255.61px;font-size:12.7px;color:#000;letter-spacing:-0.197px;left:875.6px;font-family:'DejaVu Sans Condensed','DejaVu Sans',sans-serif;">Información.</span>
<span class="t" style="top:272.61px;font-size:12.7px;color:#000;letter-spacing:0.011px;left:875.6px;font-family:'DejaVu Sans Condensed','DejaVu Sans',sans-serif;">Mandó incautar un garage de c/Narváez donde</span>
<span class="t" style="top:289.61px;font-size:12.7px;color:#000;letter-spacing:-0.007px;left:875.6px;font-family:'DejaVu Sans Condensed','DejaVu Sans',sans-serif;">había una cantidad de motos nuevas que se</span>
<span class="t" style="top:306.61px;font-size:12.7px;color:#000;letter-spacing:-0.017px;left:875.6px;font-family:'DejaVu Sans Condensed','DejaVu Sans',sans-serif;">dedicaron al uso de unos agentes de enlace que</span>
<span class="t" style="top:323.61px;font-size:12.7px;color:#000;letter-spacing:0.005px;left:875.6px;font-family:'DejaVu Sans Condensed','DejaVu Sans',sans-serif;">tenían como misión acudir al frente rápidamente</span>
<span class="t" style="top:340.61px;font-size:12.7px;color:#000;letter-spacing:0.015px;left:875.6px;font-family:'DejaVu Sans Condensed','DejaVu Sans',sans-serif;">para enterarse de la situación militar del día,</span>
<span class="t" style="top:357.61px;font-size:12.7px;color:#000;letter-spacing:0.112px;left:875.6px;font-family:'DejaVu Sans Condensed','DejaVu Sans',sans-serif;">suministro y moral de la tropa. Los datos eran</span>
<span class="t" style="top:374.61px;font-size:12.7px;color:#000;letter-spacing:0.043px;left:875.6px;font-family:'DejaVu Sans Condensed','DejaVu Sans',sans-serif;">transmitidos a la Consejería y éste la ponía a</span>
<span class="t" style="top:391.61px;font-size:12.7px;color:#000;letter-spacing:0.017px;left:875.6px;font-family:'DejaVu Sans Condensed','DejaVu Sans',sans-serif;">disposición del Estado Mayor.</span>
<span class="t" style="top:408.61px;font-size:12.7px;color:#000;letter-spacing:0.052px;left:875.6px;font-family:'DejaVu Sans Condensed','DejaVu Sans',sans-serif;">Este Servicio de Información de Frentes lo</span>
<span class="t" style="top:425.61px;font-size:12.7px;color:#000;letter-spacing:0.065px;left:875.6px;font-family:'DejaVu Sans Condensed','DejaVu Sans',sans-serif;">llevaban <span class="a" style="font-size:10px">SANTAMARIA Vicente, GIL Alvaro y ORTEGA</span>, el</span>
<span class="t" style="top:443.61px;font-size:12.7px;color:#000;letter-spacing:0.018px;left:875.6px;font-family:'DejaVu Sans Condensed','DejaVu Sans',sans-serif;">cual no tuvo mucho éxito por falta de colaboración</span>
<span class="t" style="top:460.61px;font-size:12.7px;color:#000;letter-spacing:0.020px;left:875.6px;font-family:'DejaVu Sans Condensed','DejaVu Sans',sans-serif;">en los Frentes, siendo detenidos con frecuencia.</span>
<span class="t" style="top:477.61px;font-size:12.7px;color:#000;letter-spacing:-0.001px;left:875.6px;font-family:'DejaVu Sans Condensed','DejaVu Sans',sans-serif;">La Consejería fue disuelta el 20 noviembre 36,</span>
<span class="t" style="top:494.61px;font-size:12.7px;color:#000;letter-spacing:-0.026px;left:875.6px;font-family:'DejaVu Sans Condensed','DejaVu Sans',sans-serif;">cuando la resistencia en Madrid se había</span>
<span class="t" style="top:511.61px;font-size:12.7px;color:#000;letter-spacing:-0.010px;left:875.6px;font-family:'DejaVu Sans Condensed','DejaVu Sans',sans-serif;">consolidado y ser sustituida la junta de defensa</span>
<span class="t" style="top:528.61px;font-size:12.7px;color:#000;letter-spacing:0.094px;left:875.6px;font-family:'DejaVu Sans Condensed','DejaVu Sans',sans-serif;">por otra...</span>
<span class="t" style="top:562.61px;font-size:12.7px;color:#000;letter-spacing:0.004px;left:875.6px;font-family:'DejaVu Sans Condensed','DejaVu Sans',sans-serif;">La Junta de Defensa y Servicios Especiales del</span>
<span class="t" style="top:579.61px;font-size:12.7px;color:#000;letter-spacing:0.032px;left:875.6px;font-family:'DejaVu Sans Condensed','DejaVu Sans',sans-serif;">Ministerio de Guerra, una vez disuelta la Junta,</span>
<span class="t" style="top:596.61px;font-size:12.7px;color:#000;letter-spacing:-0.009px;left:875.6px;font-family:'DejaVu Sans Condensed','DejaVu Sans',sans-serif;">instaló 2 dependencias: una en el Ministerio, cuyo</span>
<span class="t" style="top:613.61px;font-size:12.7px;color:#000;letter-spacing:0.043px;left:875.6px;font-family:'DejaVu Sans Condensed','DejaVu Sans',sans-serif;">Jefe era <span class="a" style="font-size:10px">SALGADO Manue</span>l, y otra en Fernández de la</span>
<span class="t" style="top:631.61px;font-size:12.7px;color:#000;letter-spacing:-0.048px;left:875.6px;font-family:'DejaVu Sans Condensed','DejaVu Sans',sans-serif;">Hoz 57 a cargo de <span class="a" style="font-size:10px">ORDAZ César y Mariano</span> de segundo,</span>
<span class="t" style="top:649.61px;font-size:12.7px;color:#000;letter-spacing:-0.011px;left:875.6px;font-family:'DejaVu Sans Condensed','DejaVu Sans',sans-serif;">empezando a organizar los servicios de espionaje</span>
<span class="t" style="top:666.61px;font-size:12.7px;color:#000;letter-spacing:0.009px;left:875.6px;font-family:'DejaVu Sans Condensed','DejaVu Sans',sans-serif;">e información de frentes.</span>
<span class="t" style="top:684.61px;font-size:12.7px;color:#000;letter-spacing:0.066px;left:875.6px;font-family:'DejaVu Sans Condensed','DejaVu Sans',sans-serif;">Sucesos de Toledo.</span>
<span class="t" style="top:701.61px;font-size:12.7px;color:#000;letter-spacing:0.108px;left:875.6px;font-family:'DejaVu Sans Condensed','DejaVu Sans',sans-serif;">Fundador del Ateneo Retiro.</span>
<span class="t" style="top:718.61px;font-size:12.7px;color:#000;letter-spacing:-0.013px;left:875.6px;font-family:'DejaVu Sans Condensed','DejaVu Sans',sans-serif;">Comité de Administración dedicado a actividad</span>
<span class="t" style="top:735.61px;font-size:12.7px;color:#000;letter-spacing:-0.197px;left:875.6px;font-family:'DejaVu Sans Condensed','DejaVu Sans',sans-serif;">cultural.</span>
<span class="t" style="top:752.61px;font-size:12.7px;color:#000;letter-spacing:0.035px;left:875.6px;font-family:'DejaVu Sans Condensed','DejaVu Sans',sans-serif;">Comité de Defensa del Ateneo sustituyendo a</span>
<span class="t" style="top:769.61px;font-size:12.7px;color:#000;letter-spacing:0.054px;left:875.6px;font-family:'DejaVu Sans Condensed','DejaVu Sans',sans-serif;">VALLEJO Luis en octubre 36, dedicado a la labor</span>
<span class="t" style="top:786.61px;font-size:12.7px;color:#000;letter-spacing:0.025px;left:875.6px;font-family:'DejaVu Sans Condensed','DejaVu Sans',sans-serif;">propia de la guerra..</span>
<span class="t" style="top:803.61px;font-size:12.7px;color:#000;letter-spacing:-0.014px;left:875.6px;font-family:'DejaVu Sans Condensed','DejaVu Sans',sans-serif;">Intervino en la incautación de la Residencia de</span>
<span class="t" style="top:820.61px;font-size:12.7px;color:#000;letter-spacing:-0.000px;left:875.6px;font-family:'DejaVu Sans Condensed','DejaVu Sans',sans-serif;">Estudiantes y detención de las 3 personas que allí</span>
<span class="t" style="top:837.61px;font-size:12.7px;color:#000;letter-spacing:0.021px;left:875.6px;font-family:'DejaVu Sans Condensed','DejaVu Sans',sans-serif;">se encontraban, junto con <span class="r">GARCIA Vicente,</span></span>
<span class="t" style="top:854.61px;font-size:12.7px;color:#000;letter-spacing:0.268px;left:875.6px;font-family:'DejaVu Sans Condensed','DejaVu Sans',sans-serif;"><span class="r">BELTRAN, VALLEJO Luis y Manuel, GALLO</span></span>
<span class="t" style="top:871.61px;font-size:12.7px;color:#000;letter-spacing:0.106px;left:875.6px;font-family:'DejaVu Sans Condensed','DejaVu Sans',sans-serif;"><span class="r">ARANDA Manuel</span> y otros, autorizando el Comité el</span>
<span class="t" style="top:888.61px;font-size:12.7px;color:#000;letter-spacing:-0.013px;left:875.6px;font-family:'DejaVu Sans Condensed','DejaVu Sans',sans-serif;">fusilamiento de <span class="b">DUEÑAS Manuel.</span></span>
<span class="t" style="top:905.61px;font-size:12.7px;color:#000;letter-spacing:-0.046px;left:875.6px;font-family:'DejaVu Sans Condensed','DejaVu Sans',sans-serif;"> Implicado en la ejecución de <span class="b">ARJONA Emilio y</span></span>
<span class="t" style="top:922.61px;font-size:12.7px;color:#000;letter-spacing:-0.294px;left:875.6px;font-family:'DejaVu Sans Condensed','DejaVu Sans',sans-serif;"><span class="b">Enrique</span>.</span>
<span class="t" style="top:939.61px;font-size:12.7px;color:#000;letter-spacing:0.018px;left:875.6px;font-family:'DejaVu Sans Condensed','DejaVu Sans',sans-serif;">El Comité también autorizó la ejecución de PITA</span>
<span class="t" style="top:955.61px;font-size:12.7px;color:#666;letter-spacing:-0.267px;left:875.6px;font-family:'DejaVu Sans Condensed','DejaVu Sans',sans-serif;">LACALLE Fernando, detenido el mismo día, aquella</span>
<span class="t" style="top:735.61px;font-size:12.7px;color:#000;letter-spacing:-0.041px;left:1082.7px;font-family:'DejaVu Sans Condensed','DejaVu Sans',sans-serif;">Secretario del</span>
<div style="left:0px;top:952px;width:1249px;height:29px;background:#e6e6e6;"></div>
<div style="left:0px;top:952px;width:1249px;height:1px;background:#c2c2c2;"></div>
<div style="left:0px;top:980px;width:1249px;height:1px;background:#c6c6c6;"></div>
<div style="left:0px;top:981px;width:1249px;height:21px;background:#f1f1f1;"></div>
<div style="left:0px;top:1002px;width:1249px;height:3px;background:#000;"></div>
<div style="left:92px;top:952px;width:60px;height:24px;background:#fff;"></div>
<div style="left:92px;top:975px;width:60px;height:2px;background:#217346;"></div>
<span class="t" style="top:965.53px;font-size:13.5px;color:#217346;letter-spacing:-0.353px;left:104.0px;font-weight:bold;">Hoja1</span>
<svg style="left:18px;top:959px" width="6" height="12" viewBox="0 0 6 12"><path d="M5 1V11L0.5 6Z" fill="#c4c4c4"/></svg>
<svg style="left:47px;top:959px" width="6" height="12" viewBox="0 0 6 12"><path d="M1 1V11L5.5 6Z" fill="#c4c4c4"/></svg>
<svg style="left:184px;top:957px" width="18" height="18" viewBox="0 0 18 18"><circle cx="9" cy="9" r="7.8" fill="none" stroke="#6a6a6a" stroke-width="1.2"/><path d="M9 5V13M5 9H13" stroke="#6a6a6a" stroke-width="1.6"/></svg>
<span class="t" style="top:991.35px;font-size:12px;color:#444;letter-spacing:-0.272px;left:-0.5px;">Listo</span>
<div style="left:1000px;top:962px;width:2px;height:2px;background:#b5b5b5;"></div>
<div style="left:1000px;top:965.5px;width:2px;height:2px;background:#b5b5b5;"></div>
<div style="left:1000px;top:969px;width:2px;height:2px;background:#b5b5b5;"></div>
<div style="left:1017px;top:959px;width:16px;height:15px;background:#fff;border:1px solid #ababab;box-sizing:border-box;"></div>
<svg style="left:1021px;top:962px" width="6" height="9" viewBox="0 0 6 9"><path d="M5 0.5V8.5L0.5 4.5Z" fill="#555"/></svg>
<div style="left:1032px;top:959px;width:220px;height:15px;background:#fff;border:1px solid #ababab;box-sizing:border-box;"></div>
</body></html>
